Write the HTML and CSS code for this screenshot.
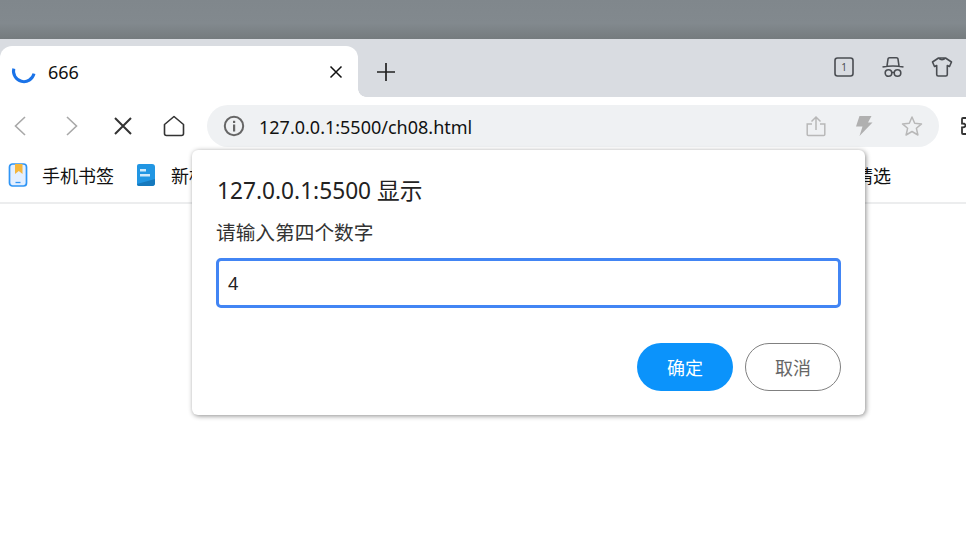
FILE: index.html
```html
<!DOCTYPE html>
<html lang="zh-CN">
<head>
<meta charset="utf-8">
<title>666</title>
<link rel="stylesheet" href="styles.css">
</head>
<body>
<div class="desktop"></div>
<div class="tabstrip">
  <div class="tab">
    <svg class="spinner" width="26" height="26" viewBox="0 0 26 26"><path d="M2.800 9.700A10.200 10.200 0 1 0 23 14.700" fill="none" stroke="#1a73e8" stroke-width="3"/></svg>
    <span class="tab-title">666</span>
    <svg class="tab-close" width="14" height="14" viewBox="0 0 14 14"><path d="M1.500 1.500l11 11M12.500 1.500l-11 11" stroke="#111" stroke-width="1.500"/></svg>
  </div>
  <svg class="new-tab" width="20" height="20" viewBox="0 0 20 20"><path d="M10 1v18M1 10h18" stroke="#222" stroke-width="1.700"/></svg>
  <div class="strip-actions">
    <svg width="22" height="22" viewBox="0 0 22 22"><rect x="2" y="2" width="18" height="18" rx="2.500" fill="none" stroke="#4a4d52" stroke-width="1.600"/><text x="11" y="15" class="count">1</text></svg>
    <svg width="24" height="22" viewBox="0 0 24 22"><path d="M6 10L7 3Q7.200 1.800 8.500 1.800H15.500Q16.800 1.800 17 3L18 10M1.500 11Q12 9 22.500 11" fill="none" stroke="#4a4d52" stroke-width="1.600"/><circle cx="7.500" cy="17" r="3.300" fill="none" stroke="#4a4d52" stroke-width="1.600"/><circle cx="16.500" cy="17" r="3.300" fill="none" stroke="#4a4d52" stroke-width="1.600"/><path d="M10.800 16.500h2.400" stroke="#4a4d52" stroke-width="1.400"/></svg>
    <svg width="22" height="22" viewBox="0 0 22 22"><path d="M7.500 2H14.500L20.500 6L18.500 10.500L16.300 9.500V18.500Q16.300 20 14.800 20H7.200Q5.700 20 5.700 18.500V9.500L3.500 10.500L1.500 6ZM7.500 2Q11 5.500 14.500 2" fill="none" stroke="#4a4d52" stroke-width="1.600" stroke-linejoin="round"/></svg>
  </div>
</div>
<div class="toolbar">
  <svg class="nav-back" width="12" height="20" viewBox="0 0 12 20"><path d="M11 1L1.500 10l9.500 9" fill="none" stroke="#a8a8a8" stroke-width="1.600"/></svg>
  <svg class="nav-forward" width="12" height="20" viewBox="0 0 12 20"><path d="M1 1l9.500 9L1 19" fill="none" stroke="#a8a8a8" stroke-width="1.600"/></svg>
  <svg class="nav-stop" width="20" height="20" viewBox="0 0 20 20"><path d="M2 2l16 16M18 2L2 18" stroke="#333" stroke-width="2"/></svg>
  <svg class="nav-home" width="22" height="22" viewBox="0 0 22 22"><path d="M11 1.500L1.500 9.500V18.500Q1.500 20.500 3.500 20.500H18.500Q20.500 20.500 20.500 18.500V9.500Z" fill="none" stroke="#333" stroke-width="1.600" stroke-linejoin="round"/></svg>
  <div class="omnibox">
    <svg class="info" width="22" height="22" viewBox="0 0 22 22"><circle cx="11" cy="11" r="9.200" fill="none" stroke="#666" stroke-width="2"/><rect x="10" y="9.500" width="2.200" height="7" fill="#666"/><rect x="10" y="5.800" width="2.200" height="2.200" fill="#666"/></svg>
    <span class="url">127.0.0.1:5500/ch08.html</span>
    <div class="omni-actions">
      <svg class="share" width="20" height="22" viewBox="0 0 20 22"><path d="M10 15V2M5.500 6.500L10 2l4.500 4.500M6 9H1.200v10.500q0 1 1 1h15.600q1 0 1-1V9H14" fill="none" stroke="#b8b8b8" stroke-width="1.500"/></svg>
      <svg width="18" height="22" viewBox="0 0 18 22"><path d="M4.500 1H16.500L13 7.500H17.500L4.500 21L7.500 11.500H1Z" fill="#b0b0b0"/></svg>
      <svg width="22" height="22" viewBox="0 0 22 22"><path d="M11 2L13.700 8.200L20.500 8.900L15.400 13.300L16.900 20L11 16.500L5.100 20L6.600 13.300L1.500 8.900L8.300 8.200Z" fill="none" stroke="#b8b8b8" stroke-width="1.500" stroke-linejoin="round"/></svg>
    </div>
  </div>
  <svg class="puzzle" width="20" height="22" viewBox="0 0 20 22"><path d="M9 3H3Q2 3 2 4V8.500Q5.500 8.500 5.500 10.500Q5.500 12.500 2 12.500V18Q2 19 3 19H9" fill="none" stroke="#333" stroke-width="1.800"/></svg>
</div>
<div class="bookmarks">
  <div class="bookmark">
    <svg width="20" height="24" viewBox="0 0 20 24"><rect x="1.500" y="1" width="17" height="22" rx="3" fill="#e3efff" stroke="#2f95f5" stroke-width="1.700"/><path d="M7 1h7.500v10l-3.700-3L7 11Z" fill="#f5b63c"/><path d="M7.500 19.500h5" stroke="#2f95f5" stroke-width="1.300"/></svg>
    <span>手机书签</span>
  </div>
  <div class="bookmark bookmark-new">
    <svg width="20" height="24" viewBox="0 0 20 24"><path d="M3 1H16Q19 1 19 4V20Q19 23 16 23H3Q1 23 1 21V3Q1 1 3 1Z" fill="#2196e3"/><path d="M1 21L19 16V20Q19 23 16 23H3Q1 23 1 21Z" fill="#1679bd"/><rect x="4" y="6" width="6" height="2.500" fill="#cfe9fa"/><rect x="4" y="11" width="10" height="2.500" fill="#cfe9fa"/></svg>
    <span>新标签</span>
  </div>
  <div class="bookmark last"><span>精选</span></div>
</div>
<div class="page"></div>

<div class="dialog">
  <div class="dialog-title">127.0.0.1:5500 显示</div>
  <div class="dialog-label">请输入第四个数字</div>
  <div class="dialog-input">4</div>
  <div class="dialog-buttons">
    <div class="btn btn-ok">确定</div>
    <div class="btn btn-cancel">取消</div>
  </div>
</div>
</body>
</html>
```

FILE: styles.css
```css
* { box-sizing: border-box; }
html, body { margin: 0; height: 100%; }
body {
  width: 966px;
  height: 535px;
  overflow: hidden;
  background: #fff;
  font-family: "Noto Sans", "Noto Sans CJK SC", sans-serif;
  color: #111;
  position: relative;
}
svg { display: block; flex: none; }

.desktop {
  height: 39px;
  background: linear-gradient(#80878c, #82898e 60%, #757b7e);
}

.tabstrip {
  height: 58px;
  background: #d9dce1;
  display: flex;
  align-items: flex-start;
  padding-top: 7px;
  position: relative;
}
.tab {
  width: 358px;
  height: 51px;
  background: #fff;
  border-radius: 12px 12px 0 0;
  display: flex;
  align-items: center;
  padding: 0 15px 0 11px;
  position: relative;
}
.tab::after {
  content: "";
  position: absolute;
  left: 100%;
  bottom: 0;
  width: 8px;
  height: 8px;
  background: radial-gradient(circle at 100% 0, #d9dce1 7.500px, #fff 8px);
}
.tab-title { margin-left: 11px; font-size: 18px; line-height: 24px; flex: 1; }
.new-tab { margin: 16px 0 0 18px; }
.strip-actions {
  margin-left: auto;
  display: flex;
  align-items: center;
  gap: 26px;
  padding: 10px 13px 0 0;
}
.count { font: 10px "Noto Sans", sans-serif; fill: #4a4d52; text-anchor: middle; }

.toolbar {
  height: 58px;
  display: flex;
  align-items: center;
  padding-left: 14px;
  background: #fff;
}
.nav-forward { margin-left: 40px; }
.nav-stop { margin-left: 35px; }
.nav-home { margin-left: 30px; }
.omnibox {
  margin-left: 22px;
  width: 732px;
  height: 42px;
  border-radius: 21px;
  background: #eff1f3;
  display: flex;
  align-items: center;
  padding: 0 16px;
  flex: none;
}
.url { margin: 2px 0 0 14px; font-size: 18px; line-height: 24px; color: #111; }
.omni-actions { margin-left: auto; display: flex; align-items: center; gap: 28px; }
.share { margin-right: 1px; }
.puzzle { margin-left: 21px; }

.bookmarks {
  height: 49px;
  display: flex;
  align-items: center;
  padding: 0 0 7px 8px;
  border-bottom: 2px solid #ecedee;
  font-size: 18px;
}
.bookmark { display: flex; align-items: center; gap: 14px; margin-right: 22px; }
.bookmark-new { gap: 15px; }
.bookmark.last { margin: 0 75px 0 auto; }

.dialog {
  position: absolute;
  left: 192px;
  top: 150px;
  width: 673px;
  height: 265px;
  background: #fff;
  border-radius: 6px;
  box-shadow: 1px 1px 5px rgba(0, 0, 0, .45);
  padding: 26px 24px 0;
  display: flex;
  flex-direction: column;
  color: #333;
}
.dialog-title { margin-left: 1px; font-size: 22.700px; line-height: 30px; color: #222; }
.dialog-label { margin-top: 14px; font-size: 19.700px; line-height: 26px; }
.dialog-input {
  margin-top: 12px;
  height: 50px;
  border: 3px solid #4285f4;
  border-radius: 5px;
  padding-left: 9px;
  font-size: 18px;
  line-height: 44px;
  color: #222;
}
.dialog-buttons {
  margin-top: 35px;
  display: flex;
  justify-content: flex-end;
  gap: 12px;
}
.btn {
  width: 96px;
  height: 48px;
  border-radius: 24px;
  font-size: 18px;
  line-height: 50px;
  text-align: center;
}
.btn-ok { background: #0b93fb; color: #fff; }
.btn-cancel { border: 1px solid #808080; line-height: 48px; color: #666; }

.page { background: #fff; }
```
